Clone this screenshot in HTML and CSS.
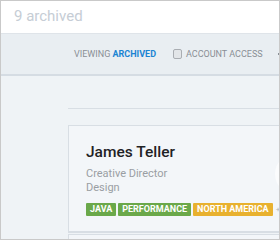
FILE: index.html
```html
<!DOCTYPE html>
<html lang="en">
<head>
    <meta charset="UTF-8"/>
    <title>Archived Users</title>
    <link rel="stylesheet" href="styles.css">
</head>
<body>
<div class="frame">
    <header class="header">
        <h1 class="count">9 archived</h1>
    </header>

    <div class="toolbar">
        <span class="viewing">Viewing <strong>Archived</strong></span>
        <label class="access">
            <span class="checkbox"></span>
            Account Access
        </label>
        <span class="more"></span>
    </div>

    <main class="main-content">
        <div class="divider"></div>

        <div class="card">
            <div class="card-body">
                <h2 class="name">James Teller</h2>
                <div class="meta">Creative Director</div>
                <div class="meta">Design</div>
                <div class="tags">
                    <span class="tag tag-green">Java</span>
                    <span class="tag tag-green">Performance</span>
                    <span class="tag tag-yellow">North America</span>
                    <span class="tag-more">+</span>
                </div>
            </div>
            <div class="avatar"></div>
        </div>
        <div class="card card-next"></div>
    </main>
</div>
</body>
</html>
```

FILE: styles.css
```css
:root {
    --blue: #1b84d2;
    --green: #6aa84a;
    --yellow: #e8b12f;
    --muted: #9a9ea3;
    --line: #d8dee4;
}

* {
    margin: 0;
    padding: 0;
    box-sizing: border-box;
}

body {
    font-family: 'Roboto', sans-serif;
    background-color: #fff;
}

.frame {
    width: 280px;
    height: 240px;
    border: 1px solid #c9c9c9;
    overflow: hidden;
    background-color: #eff3f6;
}

.header {
    height: 33px;
    background-color: #fff;
    border-bottom: 1px solid #dfe4e9;
    padding: 6px 0 0 13px;
}

.count {
    font-size: 15px;
    font-weight: 400;
    color: #c6cdd5;
}

.toolbar {
    height: 42px;
    background-color: #e9eef2;
    border-bottom: 2px solid #d5dce3;
    display: flex;
    align-items: center;
    padding-left: 73px;
    font-size: 9px;
    text-transform: uppercase;
    color: #8a8f95;
    white-space: nowrap;
}

.viewing strong {
    color: var(--blue);
    font-weight: 700;
}

.access {
    display: flex;
    align-items: center;
    gap: 4px;
    margin-left: 17px;
    flex-shrink: 0;
}

.checkbox {
    width: 9px;
    height: 10px;
    border: 1px solid #a9adb2;
    border-radius: 2px;
    background-color: #e2e5e8;
}

.more {
    width: 2px;
    height: 2px;
    margin-left: 15px;
    flex-shrink: 0;
    background-color: #8a8f95;
}

.main-content {
    padding: 32px 0 0 67px;
}

.divider {
    height: 1px;
    width: 240px;
    background-color: var(--line);
    margin-bottom: 16px;
}

.card {
    position: relative;
    width: 260px;
    height: 108px;
    background-color: #f3f6f9;
    border: 1px solid var(--line);
    border-width: 1px 1px 2px 1px;
}

.card-next {
    height: 20px;
    margin-top: 1px;
}

.card-body {
    padding: 16px 0 0 17px;
}

.name {
    font-size: 15.5px;
    font-weight: 500;
    color: #1f2225;
    line-height: 20px;
    margin-bottom: 5px;
}

.meta {
    font-size: 11px;
    color: var(--muted);
    line-height: 14px;
}

.tags {
    display: flex;
    align-items: center;
    gap: 2px;
    margin-top: 8px;
    white-space: nowrap;
}

.tag {
    height: 13px;
    line-height: 13px;
    padding: 0 4px;
    border-radius: 1px;
    font-size: 9px;
    font-weight: 700;
    color: #fff;
    text-transform: uppercase;
    flex-shrink: 0;
}

.tag-green {
    background-color: var(--green);
}

.tag-yellow {
    background-color: var(--yellow);
}

.tag-more {
    margin-left: 1px;
    font-size: 8px;
    color: #b0b4b8;
}

.avatar {
    position: absolute;
    top: 28px;
    left: 206px;
    width: 40px;
    height: 40px;
    border-radius: 50%;
    background-color: #fbfcfd;
}
```
